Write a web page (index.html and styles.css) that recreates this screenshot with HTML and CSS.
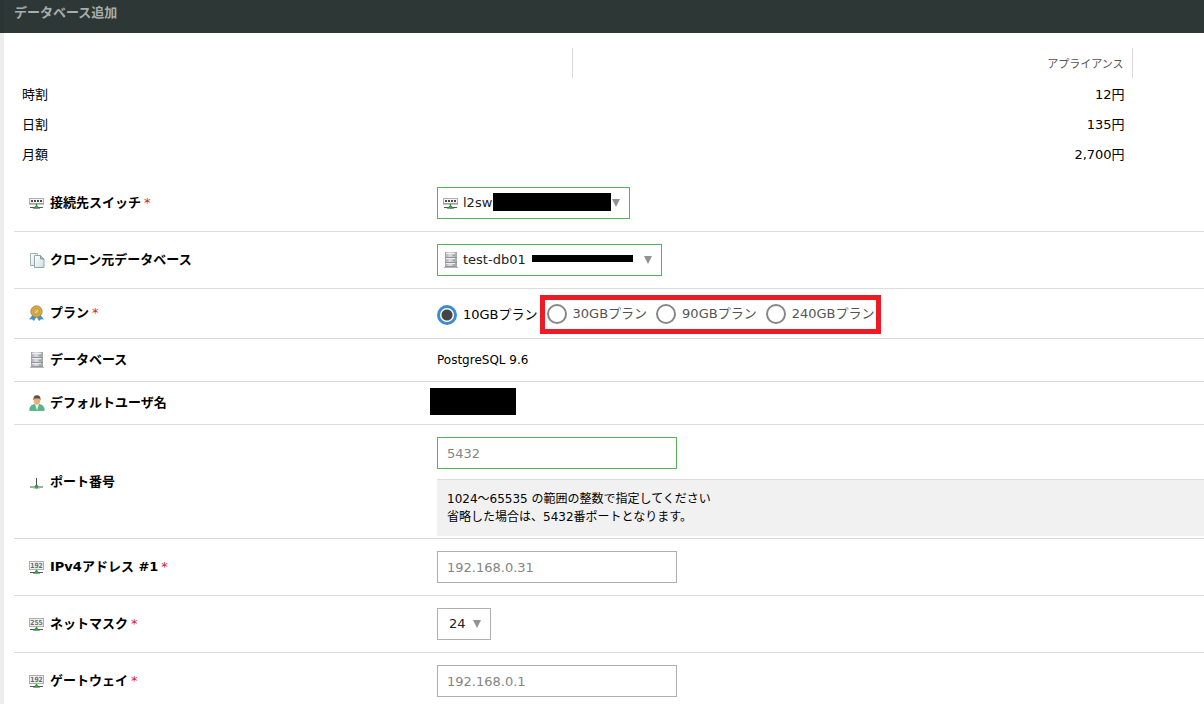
FILE: index.html
```html
<!DOCTYPE html>
<html lang="ja">
<head>
<meta charset="utf-8">
<meta name="viewport" content="width=device-width, initial-scale=1">
<title>データベース追加</title>
<link rel="stylesheet" href="styles.css">
</head>
<body>
<svg class="sprite" aria-hidden="true">
  <defs>
    <linearGradient id="steel" x1="0" y1="0" x2="1" y2="0">
      <stop offset="0" stop-color="#a2a2a8"/><stop offset=".4" stop-color="#dedee6"/><stop offset="1" stop-color="#a0a6a0"/>
    </linearGradient>
    <linearGradient id="sheet" x1="0" y1="0" x2="1" y2="1">
      <stop offset="0" stop-color="#ffffff"/><stop offset="1" stop-color="#cfdfe2"/>
    </linearGradient>
    <radialGradient id="gold">
      <stop offset="0" stop-color="#c89a3e"/><stop offset=".5" stop-color="#e8c568"/><stop offset="1" stop-color="#c9983a"/>
    </radialGradient>
  </defs>
  <symbol id="i-switch" viewBox="0 0 16 16">
    <rect x=".5" y="3.5" width="14" height="5" fill="#f4f4f4" stroke="#b0b0b0"/>
    <path d="M0 9h15" stroke="#8a8a8a"/>
    <path d="M2 5h2v2H2zM5 5h2v2H5zM8 5h2v2H8zM11 5h2v2h-2z" fill="#4a4a4a"/>
    <path d="M7.500 9v3M1 12.500h13" stroke="#555"/>
    <path d="M4 13.500h7" stroke="#999"/>
    <circle cx="7.500" cy="12" r="1.800" fill="#22b32c"/>
  </symbol>
  <symbol id="i-copy" viewBox="0 0 16 16">
    <path d="M1.500 1.500h7v12h-7z" fill="url(#sheet)" stroke="#9fb2b6"/>
    <path d="M5.500 3.500h6l3.500 3.500v8.500H5.500z" fill="url(#sheet)" stroke="#91a6aa"/>
    <path d="M11.500 3.500V7H15" fill="#a9bdc0" stroke="#849a9e"/>
  </symbol>
  <symbol id="i-medal" viewBox="0 0 16 16">
    <path d="M3.500 10L0 14.500l3-.2L5 16l3-5zM11.500 10l3.500 4.500-3-.2L10 16l-3-5z" fill="#3f91d0"/>
    <circle cx="7.500" cy="6.500" r="5.700" fill="url(#gold)" stroke="#b68732" stroke-width=".8"/>
    <circle cx="7.500" cy="6.500" r="3.200" fill="#dbb355" stroke="#b78a35" stroke-width=".8"/>
    <path d="M6.300 8l2.600-3" stroke="#f4dd96"/>
  </symbol>
  <symbol id="i-db" viewBox="0 0 16 16">
    <path d="M1 15.500h14" stroke="#b9b9b9"/>
    <path d="M2 0h12v15H2z" fill="url(#steel)"/>
    <path d="M2 5.500h12M2 10.500h12M2 14.500h12" stroke="#92929a"/>
    <path d="M3 1.500h9M3 6.500h9M3 11.500h9" stroke="#ececf2"/>
    <path d="M10 3.500h2M10 8.500h2M10 13h2" stroke="#84a787"/>
  </symbol>
  <symbol id="i-user" viewBox="0 0 16 16">
    <path d="M.800 15.500c0-4 1.700-5.500 5-6h4.400c3.300.5 5 2 5 6z" fill="#53b987" stroke="#3b9b6c" stroke-width=".6"/>
    <path d="M6 9l2 6.500L10 9z" fill="#f6f6f6"/>
    <ellipse cx="8" cy="5.500" rx="3.200" ry="4.200" fill="#e5ae7c"/>
    <path d="M4.500 5.500C4 1.500 6 .300 8 .300s4 1.200 3.500 5.200L10.500 3.500h-5z" fill="#645047"/>
  </symbol>
  <symbol id="i-port" viewBox="0 0 16 16">
    <path d="M7.500 4v8" stroke="#4c4c4c"/>
    <path d="M5 12.500q2-.500 2.500-4 .500 3.500 2.500 4z" fill="#555"/>
    <path d="M1 13h13" stroke="#555"/>
    <path d="M4 14h7" stroke="#b5b5b5"/>
    <circle cx="7.500" cy="13" r="1.700" fill="#22b32c"/>
  </symbol>
  <symbol id="i-ip" viewBox="0 0 16 16">
    <rect x=".500" y="2.500" width="14" height="8" fill="#f0f0f0" stroke="#adadad"/>
    <path d="M7.500 11v2M1 13.500h13" stroke="#555"/>
    <path d="M4 14.500h7" stroke="#a5a5a5"/>
    <circle cx="7.500" cy="13" r="1.800" fill="#22b32c"/>
  </symbol>
</svg>

<header class="titlebar"><h1 class="title">データベース追加</h1></header>

<main class="panel">
  <table class="prices">
    <thead>
      <tr><th></th><th scope="col">アプライアンス</th></tr>
    </thead>
    <tbody>
      <tr><th scope="row">時割</th><td>12円</td></tr>
      <tr><th scope="row">日割</th><td>135円</td></tr>
      <tr><th scope="row">月額</th><td>2,700円</td></tr>
    </tbody>
  </table>

  <form class="form">
    <div class="row">
      <label class="name" for="switch"><svg class="icon"><use href="#i-switch"/></svg><span>接続先スイッチ<span class="required">*</span></span></label>
      <div class="field">
        <div class="picker picker-switch">
          <svg class="icon"><use href="#i-switch"/></svg>
          <select class="control valid with-icon" id="switch"><option>l2sw</option></select>
          <span class="mask"></span>
        </div>
      </div>
    </div>

    <div class="row">
      <label class="name" for="clone"><svg class="icon"><use href="#i-copy"/></svg><span>クローン元データベース</span></label>
      <div class="field">
        <div class="picker picker-clone">
          <svg class="icon"><use href="#i-db"/></svg>
          <select class="control valid with-icon" id="clone"><option>test-db01</option></select>
          <span class="mask"></span>
        </div>
      </div>
    </div>

    <div class="row row-plan" role="radiogroup" aria-labelledby="plan">
      <div class="name" id="plan"><svg class="icon"><use href="#i-medal"/></svg><span>プラン<span class="required">*</span></span></div>
      <div class="field plans">
        <label class="plan"><input class="radio" type="radio" name="plan" checked>10GBプラン</label>
        <div class="marked">
          <label class="plan"><input class="radio" type="radio" name="plan">30GBプラン</label>
          <label class="plan"><input class="radio" type="radio" name="plan">90GBプラン</label>
          <label class="plan"><input class="radio" type="radio" name="plan">240GBプラン</label>
        </div>
      </div>
    </div>

    <div class="row row-text">
      <div class="name"><svg class="icon"><use href="#i-db"/></svg><span>データベース</span></div>
      <div class="field value">PostgreSQL 9.6</div>
    </div>

    <div class="row row-text">
      <div class="name"><svg class="icon"><use href="#i-user"/></svg><span>デフォルトユーザ名</span></div>
      <div class="field"><div class="hidden-name"></div></div>
    </div>

    <div class="row row-port">
      <label class="name" for="port"><svg class="icon"><use href="#i-port"/></svg><span>ポート番号</span></label>
      <div class="field">
        <input class="control text valid" id="port" type="text" placeholder="5432">
        <p class="hint">1024～65535 の範囲の整数で指定してください<br>省略した場合は、5432番ポートとなります。</p>
      </div>
    </div>

    <div class="row">
      <label class="name" for="ip"><svg class="icon" viewBox="0 0 16 16"><use href="#i-ip"/><text class="digits" x="7.5" y="9">192</text></svg><span>IPv4アドレス #1<span class="required">*</span></span></label>
      <div class="field"><input class="control text" id="ip" type="text" placeholder="192.168.0.31"></div>
    </div>

    <div class="row">
      <label class="name" for="netmask"><svg class="icon" viewBox="0 0 16 16"><use href="#i-ip"/><text class="digits" x="7.5" y="9">255</text></svg><span>ネットマスク<span class="required">*</span></span></label>
      <div class="field">
        <div class="picker picker-netmask">
          <select class="control" id="netmask"><option>24</option></select>
        </div>
      </div>
    </div>

    <div class="row">
      <label class="name" for="gateway"><svg class="icon" viewBox="0 0 16 16"><use href="#i-ip"/><text class="digits" x="7.5" y="9">192</text></svg><span>ゲートウェイ<span class="required">*</span></span></label>
      <div class="field"><input class="control text" id="gateway" type="text" placeholder="192.168.0.1"></div>
    </div>
  </form>
</main>
</body>
</html>
```
FILE: styles.css
```css
* {
  box-sizing: border-box;
}

html {
  overflow: hidden;
}

body {
  margin: 0;
  background: #fff;
  color: #000;
  font: 13px/18px "DejaVu Sans", "Noto Sans CJK JP", sans-serif;
}

.sprite {
  position: absolute;
  width: 0;
  height: 0;
}

.titlebar {
  height: 33px;
  padding: 4px 14px 4px 10px;
  border-left: 4px solid #2a3432;
  background: #2d3836;
}

.title {
  margin: 0;
  color: #a9adac;
  font-size: 13px;
  font-weight: 700;
  line-height: 18px;
}

.panel {
  padding: 15px 0 0 10px;
  border-left: 4px solid #ededed;
}

/* Prices */
.prices {
  width: 94%;
  border-collapse: separate;
  border-spacing: 0;
  table-layout: fixed;
}

.prices th,
.prices td {
  height: 30px;
  padding: 3px 8px 0;
  font-weight: 400;
  text-align: right;
}

.prices tbody th {
  text-align: left;
}

.prices thead th {
  border-right: 1px solid #d9d9d9;
  color: #555;
  font-size: 11px;
}

/* Form rows */
.form {
  padding-top: 7px;
}

.row {
  display: grid;
  grid-template-columns: 423fr 767fr;
  align-items: center;
  padding: 12px 0;
  border-bottom: 1px solid #dcdcdc;
}

.row-plan {
  padding: 6px 0 4px;
}

.row-text {
  min-height: 43px;
  padding: 6px 0;
}

.row-port {
  padding-bottom: 2px;
}

.name {
  display: flex;
  align-items: center;
  gap: 5px;
  padding-left: 15px;
  font-weight: 700;
}

.row-plan .name {
  padding-bottom: 4px;
}

.row-port .name {
  padding-bottom: 10px;
}

.required {
  margin-left: 3px;
  color: #d2232f;
  font-weight: 400;
}

.icon {
  flex: none;
  width: 16px;
  height: 16px;
}

.digits {
  fill: #666;
  font: 700 7px "DejaVu Sans Mono", monospace;
  text-anchor: middle;
}

.value {
  font-size: 12px;
}

/* Controls */
.control {
  display: block;
  height: 32px;
  margin: 0;
  padding: 0 9px;
  border: 1px solid #aeaeae;
  border-radius: 0;
  background: #fff;
  color: #222;
  font: inherit;
}

.text {
  width: 240px;
}

.text::placeholder {
  color: #858585;
  opacity: 1;
}

.valid {
  border-color: #56b458;
}

.picker {
  position: relative;
}

.picker .control {
  width: 100%;
  appearance: none;
  padding: 0 0 0 11px;
}

.picker .with-icon {
  padding-left: 25px;
}

.picker .icon {
  position: absolute;
  top: 8px;
  left: 6px;
}

.picker::after {
  position: absolute;
  top: 12px;
  right: 10px;
  border: solid transparent;
  border-width: 8px 4px 0;
  border-top-color: #929292;
  content: "";
  pointer-events: none;
}

.picker-switch {
  width: 193px;
}

.picker-clone {
  width: 225px;
}

.picker-netmask {
  width: 54px;
}

.mask {
  position: absolute;
  background: #000;
}

.picker-switch .mask {
  top: 6px;
  right: 19px;
  width: 118px;
  height: 18px;
}

.picker-clone .mask {
  top: 11px;
  right: 29px;
  width: 101px;
  height: 7px;
}

/* Plans */
.plans,
.marked {
  display: flex;
  align-items: center;
}

.plans {
  gap: 2px;
}

.marked {
  gap: 9px;
  padding: 4px 2px 5px;
  border: 5px solid #ed1c24;
  color: #555;
}

.plan {
  display: flex;
  align-items: center;
  gap: 6px;
  white-space: nowrap;
}

.radio {
  width: 20px;
  height: 20px;
  margin: 0;
  border: 2px solid #878787;
  border-radius: 50%;
  appearance: none;
}

.radio:checked {
  border: 3px solid #3c8bd3;
  background: radial-gradient(circle, #444 0 5px, #fff 6px);
}

.hidden-name {
  width: 86px;
  height: 27px;
  margin: 0 0 3px -7px;
  background: #000;
}

.hint {
  margin: 10px 0 0;
  padding: 10px;
  border-top: 1px solid #dcdcdc;
  background: #f1f1f1;
  font-size: 12px;
}
```
